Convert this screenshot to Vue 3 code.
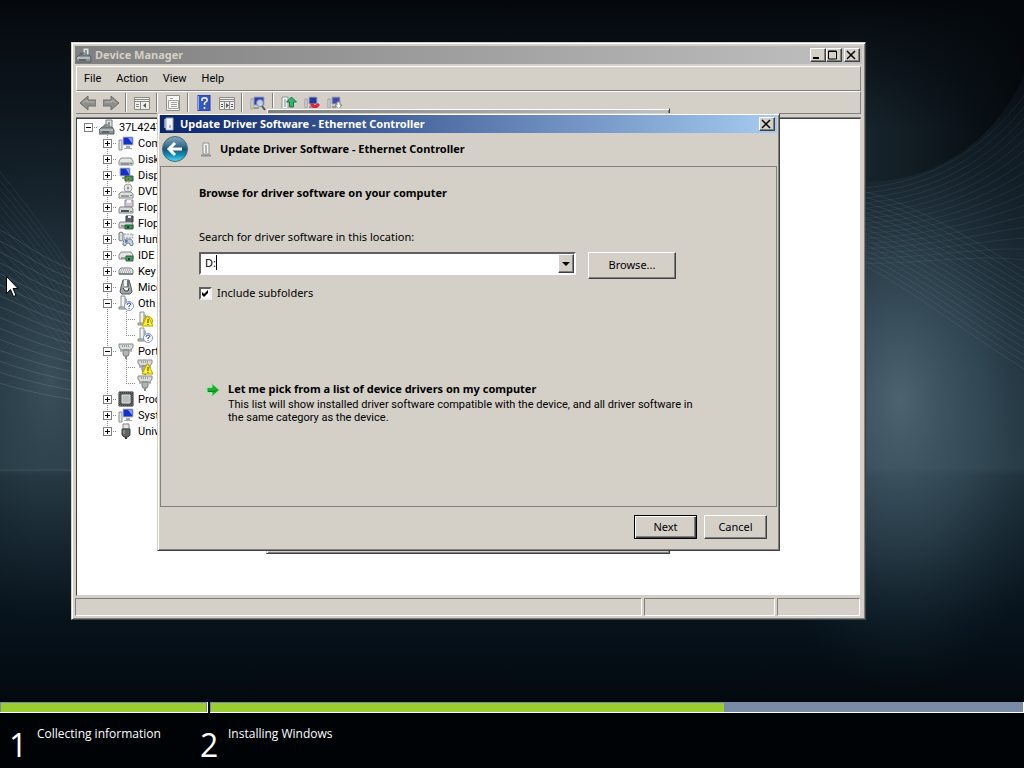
<script setup>
import { ref } from 'vue'

const location = ref('D:')
const includeSubfolders = ref(true)
const menus = ['File', 'Action', 'View', 'Help']

const tools = [
  { icon: 'back', name: 'Back' },
  { icon: 'forward', name: 'Forward' },
  { sep: true },
  { icon: 'tree-pane', name: 'Show or hide console tree' },
  { sep: true },
  { icon: 'props', name: 'Properties' },
  { sep: true },
  { icon: 'help', name: 'Help' },
  { icon: 'action-pane', name: 'Show or hide action pane' },
  { sep: true },
  { icon: 'scan', name: 'Scan for hardware changes' },
  { sep: true },
  { icon: 'update', name: 'Update driver' },
  { icon: 'uninstall', name: 'Uninstall' },
  { icon: 'disable', name: 'Disable' },
]

// guides: one cell per indent column, drawn left to right
const devices = [
  { label: '37L4247', icon: 'root', guides: ['root'] },
  { label: 'Com', icon: 'computer', guides: ['none', 'plus'] },
  { label: 'Disk', icon: 'disk', guides: ['none', 'plus'] },
  { label: 'Disp', icon: 'display', guides: ['none', 'plus'] },
  { label: 'DVD', icon: 'dvd', guides: ['none', 'plus'] },
  { label: 'Flop', icon: 'floppy', guides: ['none', 'plus'] },
  { label: 'Flop', icon: 'floppy-ctl', guides: ['none', 'plus'] },
  { label: 'Hum', icon: 'hid', guides: ['none', 'plus'] },
  { label: 'IDE', icon: 'ide', guides: ['none', 'plus'] },
  { label: 'Key', icon: 'keyboard', guides: ['none', 'plus'] },
  { label: 'Mice', icon: 'mouse', guides: ['none', 'plus'] },
  { label: 'Oth', icon: 'unknown', guides: ['none', 'minus'] },
  { label: '', icon: 'unknown-warn', guides: ['none', 'line', 'branch'] },
  { label: '', icon: 'unknown', guides: ['none', 'line', 'last'] },
  { label: 'Port', icon: 'port', guides: ['none', 'minus'] },
  { label: '', icon: 'port-warn', guides: ['none', 'line', 'branch'] },
  { label: '', icon: 'port', guides: ['none', 'line', 'last'] },
  { label: 'Proc', icon: 'cpu', guides: ['none', 'plus'] },
  { label: 'Syst', icon: 'computer', guides: ['none', 'plus'] },
  { label: 'Univ', icon: 'usb', guides: ['none', 'plus-last'] },
]

const steps = [
  { title: 'Collecting information', progress: 100 },
  { title: 'Installing Windows', progress: 63.2 },
]

function leftWave(n) {
  return `M-10 ${215 + n * 11} C 20 ${225 + n * 11}, 50 ${262 + n * 9}, 110 ${270 + n * 9}`
}
function leftWaveBack(n) {
  return `M-10 ${150 + n * 9} C 20 ${190 + n * 8}, 60 ${235 + n * 7}, 110 ${330 + n * 6}`
}
function rightWave(n) {
  return `M840 ${184 + n * 5} C 930 ${184 + n * 5}, 990 ${140 + n * 7}, 1034 ${70 + n * 12}`
}
function rightWaveBack(n) {
  return `M850 ${184 + n * 5} C 900 ${190 + n * 6}, 960 ${225 + n * 7}, 1034 ${270 + n * 7}`
}
</script>

<template>
  <main class="screen">
    <svg class="wallpaper" viewBox="0 0 1024 768" preserveAspectRatio="none" aria-hidden="true">
      <defs>
        <linearGradient id="base" x1="0" y1="0" x2="0" y2="1">
          <stop offset="0" stop-color="#04080d" />
          <stop offset=".2" stop-color="#111c24" />
          <stop offset=".5" stop-color="#22343f" />
          <stop offset=".61" stop-color="#263943" />
          <stop offset=".62" stop-color="#1c2d37" />
          <stop offset=".8" stop-color="#07131c" />
          <stop offset="1" stop-color="#000205" />
        </linearGradient>
        <radialGradient id="glow-r" gradientUnits="userSpaceOnUse" cx="0" cy="0" r="1" gradientTransform="translate(900 400) scale(170 290)">
          <stop offset="0" stop-color="#5b727e" stop-opacity=".75" />
          <stop offset=".5" stop-color="#456270" stop-opacity=".4" />
          <stop offset="1" stop-color="#1c303c" stop-opacity="0" />
        </radialGradient>
        <radialGradient id="glow-l" gradientUnits="userSpaceOnUse" cx="0" cy="0" r="1" gradientTransform="translate(50 380) scale(130 250)">
          <stop offset="0" stop-color="#58727e" stop-opacity=".45" />
          <stop offset="1" stop-color="#1c303c" stop-opacity="0" />
        </radialGradient>
        <linearGradient id="arc" x1="0" y1="0" x2="1" y2="0">
          <stop offset="0" stop-color="#1a2831" />
          <stop offset="1" stop-color="#04090d" />
        </linearGradient>
        <linearGradient id="arc-fade" x1="0" y1="0" x2="0" y2="1">
          <stop offset="0" stop-color="#04080d" />
          <stop offset="1" stop-color="#04080d" stop-opacity="0" />
        </linearGradient>
      </defs>
      <rect width="1024" height="768" fill="url(#base)" />
      <rect width="1024" height="768" fill="url(#glow-l)" />
      <rect width="1024" height="768" fill="url(#glow-r)" />
      <path d="M840 0H1024V75C1000 130 950 180 865 182H840Z" fill="url(#arc)" />
      <rect x="840" width="184" height="130" fill="url(#arc-fade)" />
      <g fill="none" stroke="#8fa5ae" stroke-opacity=".22">
        <path v-for="n in 15" :key="'l' + n" :d="leftWave(n)" />
        <path v-for="n in 14" :key="'m' + n" :d="leftWaveBack(n)" stroke-opacity=".12" />
        <path v-for="n in 16" :key="'r' + n" :d="rightWave(n)" stroke-opacity=".1" />
        <path v-for="n in 15" :key="'s' + n" :d="rightWaveBack(n)" stroke-opacity=".14" />
      </g>
      <path d="M0 470H100" stroke="#6b828c" stroke-opacity=".3" />
    </svg>

    <!-- icon sheet -->
    <svg class="sheet" aria-hidden="true">
      <symbol id="root" viewBox="0 0 16 16">
        <path d="M7 1h6v8H7z" fill="#dfe3e3" stroke="#788080" /><path d="M9 3h2v5H9z" fill="#8b9494" />
        <path d="M3 8h10l2 3v4H0v-4z" fill="#889191" stroke="#565f60" /><path d="M1 11h13" stroke="#dce4e4" /><path d="M3 13h7" stroke="#343c3c" /><path d="M5 8V6h4" fill="none" stroke="#555" />
      </symbol>
      <symbol id="computer" viewBox="0 0 16 16">
        <path d="M1 5h3v10H1z" fill="#e2e4e8" stroke="#888d94" /><path d="M5 2h10v8H5z" fill="#1730c5" stroke="#b7bfd2" /><path d="M10 3h4v5z" fill="#7a9ef5" /><path d="M8 11h4v2H8zM6 13h8v1H6z" fill="#a6a9b5" />
      </symbol>
      <symbol id="disk" viewBox="0 0 16 16">
        <path d="M3 7h10l2 3v4H1v-4z" fill="#e3e5e4" stroke="#8a8e8d" /><path d="M1 11h14v3H1z" fill="#b5b9b8" /><path d="M3 13h8" stroke="#656969" /><path d="M12 12h2v1h-2z" fill="#42a63f" />
      </symbol>
      <symbol id="display" viewBox="0 0 16 16">
        <path d="M2 1h10v8H2z" fill="#1730c5" stroke="#b7bfd2" /><path d="M8 2h3v5z" fill="#7a9ef5" /><path d="M4 10h6v2H4z" fill="#9ba3aa" /><path d="M7 9h8v5H7z" fill="#3d8e5c" stroke="#25633c" /><path d="M9 11h3v2H9zM8 14v2M11 14v2" fill="#182d22" stroke="#a69642" />
      </symbol>
      <symbol id="dvd" viewBox="0 0 16 16">
        <circle cx="10" cy="5" r="4" fill="#e9ebeb" stroke="#9b9e9e" /><path d="M10 1v8" stroke="#b9bcbc" /><circle cx="10" cy="5" r="1" fill="#777" /><path d="M3 9h10l2 2v4H1v-4z" fill="#dfe1df" stroke="#848988" /><path d="M3 13h8" stroke="#555c5a" /><path d="M12 12h2v1h-2z" fill="#42a63f" />
      </symbol>
      <symbol id="floppy" viewBox="0 0 16 16">
        <path d="M7 1h8v7H7z" fill="#cec4d2" stroke="#928a9d" /><path d="M9 1h4v3H9z" fill="#f6f3f8" /><path d="M2 8h11l2 2v4H1v-4z" fill="#d7dad8" stroke="#808583" /><path d="M3 12h8" stroke="#4e5452" stroke-width="2" /><path d="M12 12h2v1h-2z" fill="#42a63f" />
      </symbol>
      <symbol id="floppy-ctl" viewBox="0 0 16 16">
        <path d="M8 1h7v6H8z" fill="#5c6170" stroke="#373b45" /><path d="M10 1h3v2h-3z" fill="#eee" /><path d="M2 7h11l2 2v4H1V9z" fill="#d7dad8" stroke="#808583" /><path d="M3 11h5" stroke="#4e5452" /><path d="M7 10h8v4H7z" fill="#3d8e5c" stroke="#25633c" /><path d="M9 11h2v2H9z" fill="#193d28" />
      </symbol>
      <symbol id="hid" viewBox="0 0 16 16">
        <path d="M1 2q2-2 4 0v7q-2 2-4 0z" fill="#d9dada" stroke="#707575" /><path d="M6 3h9v4H6z" fill="#e4e5e5" stroke="#9ca2a4" stroke-dasharray="2 1" /><path d="M5 14q0-6 3-6h4q3 0 3 6l-2 1-2-3H9l-2 3z" fill="#c3cee0" stroke="#697fa5" /><path d="M8 9v3M7 10h3" stroke="#355d99" />
      </symbol>
      <symbol id="ide" viewBox="0 0 16 16">
        <path d="M3 5h10l2 3v4H1V8z" fill="#e3e5e4" stroke="#8a8e8d" /><path d="M3 11h5" stroke="#656969" /><path d="M8 9h7v5H8z" fill="#4b9568" stroke="#25633c" /><path d="M10 11h2v2h-2z" fill="#183d28" />
      </symbol>
      <symbol id="keyboard" viewBox="0 0 16 16">
        <path d="M3 5h10l2 2v4H1V7z" fill="#e4e5e5" stroke="#7f8484" /><path d="M3 7h10M2 9h12" stroke="#858b8b" stroke-dasharray="1 1" /><path d="M1 11h14" stroke="#505555" />
      </symbol>
      <symbol id="mouse" viewBox="0 0 16 16">
        <path d="M5 1h6l2 7 1 5-2 2H4l-2-2 1-5z" fill="#a3a8a8" stroke="#535959" /><path d="M6 1h3v6H6z" fill="#f3f4f4" /><path d="M10 2v6" stroke="#3b4040" /><path d="M5 9l2 3h3l1-3" fill="#eee" stroke="#303434" />
      </symbol>
      <symbol id="unknown-base" viewBox="0 0 16 16">
        <path d="M3 1h4v12H3z" fill="#f1f3f2" stroke="#8c9491" /><path d="M7 3l2 1v9H7z" fill="#a6aeab" /><path d="M1 12h9v2H1z" fill="#c0c7c4" stroke="#7f8784" />
      </symbol>
      <symbol id="unknown" viewBox="0 0 16 16">
        <use href="#unknown-base" /><circle cx="11" cy="11" r="4.500" fill="#fff" stroke="#8794bd" /><path d="M9 10q0-2 2-2 2 0 2 1 0 1-2 2v1M11 13v1" fill="none" stroke="#2941a0" />
      </symbol>
      <symbol id="bang" viewBox="0 0 16 16">
        <path d="M10 5h1l5 10H5z" fill="#ffef32" stroke="#b3a000" /><path d="M11 8v4M11 13v1" stroke="#42400c" />
      </symbol>
      <symbol id="unknown-warn" viewBox="0 0 16 16"><use href="#unknown-base" /><circle cx="11" cy="10" r="4.500" fill="#f5e831" stroke="#b3a000" /><use href="#bang" /></symbol>
      <symbol id="port" viewBox="0 0 16 16">
        <path d="M1 1h14v3l-2 3H3L1 4z" fill="#d8dbda" stroke="#858a88" /><path d="M4 3h8" stroke="#626967" stroke-dasharray="1 1" /><path d="M5 7h6v4l-1 2H6l-1-2z" fill="#b1b6b4" stroke="#767d7a" /><path d="M7 13h2v3H7z" fill="#858d89" /><path d="M3 7v2M13 7v2" stroke="#777" />
      </symbol>
      <symbol id="port-warn" viewBox="0 0 16 16"><use href="#port" /><use href="#bang" /></symbol>
      <symbol id="cpu" viewBox="0 0 16 16">
        <path d="M1 1h14v14H1z" fill="#505455" stroke="#2b2e2f" /><path d="M1 1h14v14H1z" fill="none" stroke="#8d9191" stroke-dasharray="1 1" /><path d="M4 4h8v8H4z" fill="#b9bdbd" stroke="#dfe1e1" />
      </symbol>
      <symbol id="usb" viewBox="0 0 16 16">
        <path d="M5 1h6v5H5z" fill="#e2e3e3" stroke="#808585" /><path d="M4 6h8v6l-2 2H6l-2-2z" fill="#606566" stroke="#3c4040" /><path d="M7 14h2v2H7z" fill="#333" /><path d="M6 7v4" stroke="#aaa" />
      </symbol>

      <symbol id="back" viewBox="0 0 16 16"><path d="M0 8l8-7v4h8v6H8v4z" fill="#8d8d8a" stroke="#6f6f6d" /><path d="M3 8l4-3v2h7" fill="none" stroke="#b7b7b3" /></symbol>
      <symbol id="forward" viewBox="0 0 16 16"><path d="M16 8L8 1v4H0v6h8v4z" fill="#8d8d8a" stroke="#6f6f6d" /><path d="M2 7h7V5l4 3" fill="none" stroke="#b7b7b3" /></symbol>
      <symbol id="tree-pane" viewBox="0 0 16 16">
        <path d="M.5 2.500h15v12H.5z" fill="#eeeeeb" stroke="#8a8a86" /><path d="M1 4.500h14M1 6.500h14M6.500 7v8" stroke="#8a8a86" /><path d="M2 9.500h3M2 11.500h3" stroke="#888" /><path d="M12 8v5L9 10.500z" fill="#555" />
      </symbol>
      <symbol id="action-pane" viewBox="0 0 16 16">
        <path d="M.5 2.500h15v12H.5z" fill="#eeeeeb" stroke="#8a8a86" /><path d="M1 4.500h14M1 6.500h14M10.500 7v8M5.500 7v8" stroke="#8a8a86" /><path d="M12 9.500h2M12 11.500h2M2 9.500h2M2 11.500h2" stroke="#555" /><path d="M7 8v5l3-2.500z" fill="#555" />
      </symbol>
      <symbol id="props" viewBox="0 0 16 16"><path d="M1.500.5h13v15h-13z" fill="#f6f6f4" stroke="#8d8d88" /><path d="M5 3.500h3M6 7.500h6M6 9.500h6M6 11.500h6M3.500 5.500h10v8h-10z" fill="none" stroke="#a3a39e" /></symbol>
      <symbol id="help" viewBox="0 0 16 16"><path d="M2 0h12v16H2z" fill="#3456cb" stroke="#2341a6" /><path d="M2.500 1v14" stroke="#91a9ef" /><path d="M6 6V4l1-1h3l1 1v2L8.500 8v2M8.500 12v2" fill="none" stroke="#fff" stroke-width="1.500" /></symbol>
      <symbol id="scan" viewBox="0 0 16 16"><path d="M1 4h2v10H1z" fill="#eee" stroke="#999" /><path d="M4 2h10v8H4z" fill="#2c3eb0" stroke="#a1a6b8" /><circle cx="10" cy="8" r="3.500" fill="#d7e6f5" fill-opacity=".85" stroke="#7686a0" /><path d="M12 11l3 4" stroke="#555" stroke-width="2" /><path d="M4 12h5v2H4z" fill="#999" /></symbol>
      <symbol id="update" viewBox="0 0 16 16"><path d="M1 2h6v12H1z" fill="#f3f3f3" stroke="#8f9692" /><path d="M3 4h2v8H3z" fill="#b7bfbb" /><path d="M7 14h4" stroke="#999" /><path d="M10.500 2l5 5h-3v5h-4V7h-3z" fill="#37b273" stroke="#197945" /></symbol>
      <symbol id="uninstall" viewBox="0 0 16 16"><path d="M1 4h2v9H1z" fill="#eee" stroke="#999" /><path d="M5 2h8v7H5z" fill="#26349e" stroke="#a9abc0" /><path d="M5 11h5v2H5z" fill="#999" /><path d="M8 8l3 2 3-2 2 2-5 5-5-5z" fill="#dc263d" /></symbol>
      <symbol id="disable" viewBox="0 0 16 16"><path d="M1 4h2v9H1z" fill="#eee" stroke="#999" /><path d="M5 2h8v7H5z" fill="#3f4da4" stroke="#a9abc0" /><path d="M5 11h4v2H5z" fill="#999" /><path d="M10 7h3v3h2l-3.500 4L8 10h2z" fill="#fff" stroke="#888" /></symbol>
    </svg>

    <section class="desktop">
      <div class="window manager">
        <header class="titlebar inactive">
          <svg class="icon"><use href="#root" /></svg>
          <h1>Device Manager</h1>
          <div class="caption-buttons">
            <button aria-label="Minimize"><svg viewBox="0 0 12 10"><path d="M2 8h6" stroke="#000" stroke-width="2" /></svg></button>
            <button aria-label="Maximize"><svg viewBox="0 0 12 10"><path d="M1.500 1h8v8h-8zM1 1.500h9" fill="none" stroke="#000" /></svg></button>
            <button class="close" aria-label="Close"><svg viewBox="0 0 12 10"><path d="M2 1l8 8M10 1L2 9" stroke="#000" stroke-width="1.500" /></svg></button>
          </div>
        </header>
        <nav class="menubar">
          <button v-for="menu in menus" :key="menu">{{ menu }}</button>
        </nav>
        <div class="toolbar">
          <template v-for="(tool, i) in tools" :key="i">
            <span v-if="tool.sep" class="sep"></span>
            <button v-else :aria-label="tool.name"><svg class="icon"><use :href="'#' + tool.icon" /></svg></button>
          </template>
        </div>
        <ul class="tree">
          <li v-for="(device, i) in devices" :key="i">
            <svg v-for="(guide, g) in device.guides" :key="g" class="guide" viewBox="0 0 19 16">
              <g fill="none" stroke="#8c8c8c" stroke-dasharray="1 1">
                <path v-if="['plus', 'minus', 'line', 'branch'].includes(guide)" d="M9.500 0v16" />
                <path v-if="['plus-last', 'last'].includes(guide)" d="M9.500 0v8" />
                <path v-if="!['none', 'line'].includes(guide)" d="M9 8.500h10" />
              </g>
              <g v-if="['root', 'plus', 'minus', 'plus-last'].includes(guide)">
                <rect x="5.500" y="4.500" width="8" height="8" fill="#fff" stroke="#808080" />
                <path d="M7 8.500h5" stroke="#000" />
                <path v-if="guide.startsWith('plus')" d="M9.500 6v5" stroke="#000" />
              </g>
            </svg>
            <svg class="icon"><use :href="'#' + device.icon" /></svg>
            <span>{{ device.label }}</span>
          </li>
        </ul>
        <footer class="statusbar"><span></span><span></span><span></span></footer>
      </div>

      <div class="window behind">
        <div class="titlebar inactive"></div>
      </div>

      <form class="window dialog" @submit.prevent>
        <header class="titlebar">
          <svg class="icon"><path d="M5 2h7v12H5z" fill="#f3f5f4" stroke="#9ca9b6" /><path d="M4 3v9" stroke="#fff" /><path d="M8 9h2v3H8z" fill="#aeb8bd" /></svg>
          <h2>Update Driver Software - Ethernet Controller</h2>
          <div class="caption-buttons">
            <button type="button" class="close" aria-label="Close"><svg viewBox="0 0 12 10"><path d="M2 1l8 8M10 1L2 9" stroke="#000" stroke-width="1.500" /></svg></button>
          </div>
        </header>
        <div class="wizard-head">
          <button type="button" class="go-back" aria-label="Back">
            <svg viewBox="0 0 28 28">
              <defs>
                <linearGradient id="orb" x1="0" y1="0" x2="0" y2="1">
                  <stop offset="0" stop-color="#86a9bb" /><stop offset=".35" stop-color="#3f7494" /><stop offset=".5" stop-color="#135477" /><stop offset=".75" stop-color="#138fb8" /><stop offset="1" stop-color="#55dcf3" />
                </linearGradient>
              </defs>
              <circle cx="14" cy="14" r="12.500" fill="url(#orb)" stroke="#4b6678" />
              <path d="M21 14H9M14 8l-6 6 6 6" fill="none" stroke="#fff" stroke-width="3" />
            </svg>
          </button>
          <svg class="icon"><path d="M5 2h6v11H5z" fill="#f4f4f2" stroke="#8e9190" /><path d="M7 4h2v8H7z" fill="#b0b4b2" /><path d="M3 14.500h10" stroke="#8e9190" stroke-width="2" /></svg>
          <strong>Update Driver Software - Ethernet Controller</strong>
        </div>
        <div class="wizard-body">
          <h3>Browse for driver software on your computer</h3>
          <label for="location">Search for driver software in this location:</label>
          <div class="location-row">
            <div class="combo">
              <input id="location" v-model="location" type="text" />
              <i class="caret"></i>
              <button type="button" aria-label="Show locations"><svg viewBox="0 0 12 16"><path d="M2 6h8l-4 4z" /></svg></button>
            </div>
            <button type="button" class="push browse">Browse...</button>
          </div>
          <div class="check-row">
            <input id="subfolders" v-model="includeSubfolders" type="checkbox" />
            <svg v-if="includeSubfolders" class="tick" viewBox="0 0 12 12"><path d="M3 5l2 2 4-4v3L5 10 3 8z" /></svg>
            <label for="subfolders">Include subfolders</label>
          </div>
          <button type="button" class="command">
            <svg viewBox="0 0 14 14"><path d="M1 4.500h5V.5l7.500 6.500L6 13.500v-4H1z" fill="#16b02d" stroke="#a5dfab" /><path d="M2 8.500h6l3-1.500" fill="none" stroke="#0a7d1d" /></svg>
            <span class="command-text">
              <strong>Let me pick from a list of device drivers on my computer</strong>
              <span>This list will show installed driver software compatible with the device, and all driver software in the same category as the device.</span>
            </span>
          </button>
        </div>
        <footer class="wizard-foot">
          <button class="push default">Next</button>
          <button type="button" class="push">Cancel</button>
        </footer>
      </form>

      <svg class="pointer" viewBox="0 0 12 21" aria-hidden="true">
        <path d="M.5.5v17l4-4 3 7 2.500-1-3-7h5z" fill="#fff" stroke="#000" />
      </svg>
    </section>

    <section class="setup">
      <div class="bars">
        <div v-for="step in steps" :key="step.title" class="bar">
          <div class="fill" :style="{ width: step.progress + '%' }"></div>
        </div>
      </div>
      <ol class="steps">
        <li v-for="(step, i) in steps" :key="step.title">
          <span class="number">{{ i + 1 }}</span>
          <span>{{ step.title }}</span>
        </li>
      </ol>
    </section>
  </main>
</template>

<style>
body {
  margin: 0;
  background: #03080d;
}
</style>

<style scoped>
.screen {
  position: relative;
  display: flex;
  flex-direction: column;
  min-height: 100vh;
  overflow: hidden;
  font-family: "Noto Sans", "Open Sans", sans-serif;
  font-size: 11px;
  line-height: 16px;
  color: #000;
}

.wallpaper {
  position: absolute;
  width: 100%;
  height: 100%;
}

.sheet {
  position: absolute;
  width: 0;
  height: 0;
}

button {
  font: inherit;
  color: inherit;
  padding: 0;
  border: none;
  background: none;
}

h1, h2, h3, ul, ol {
  margin: 0;
  padding: 0;
  font-size: inherit;
  list-style: none;
}

svg {
  display: block;
}

.icon {
  width: 16px;
  height: 16px;
  flex: none;
}

.desktop {
  position: relative;
  flex: 1;
  min-height: 640px;
}

.window {
  position: absolute;
  box-sizing: border-box;
  padding: 1px;
  background: #d4d0c8;
  border: 1px solid;
  border-color: #d4d0c8 #404040 #404040 #d4d0c8;
  box-shadow: inset 1px 1px #fff, inset -1px -1px #808080;
}

.manager {
  left: 71px;
  top: 42px;
  width: calc(100% - 229px);
  padding: 3px;
}

.behind {
  left: 266px;
  top: 108px;
  width: calc(100% - 620px);
  height: 446px;
}

.dialog {
  left: 157px;
  top: 113px;
  width: calc(100% - 401px);
}

.titlebar {
  display: flex;
  align-items: center;
  gap: 3px;
  height: 18px;
  padding: 0 2px 0 1px;
  color: #fff;
  background: linear-gradient(90deg, #0a246a, #a6caf0);
}

.dialog .titlebar {
  margin: 0 1px;
}

.titlebar.inactive {
  color: #d4d0c8;
  background: linear-gradient(90deg, #808080, #c0c0c0);
}

.caption-buttons {
  display: flex;
  margin-left: auto;
}

.caption-buttons button {
  width: 16px;
  height: 14px;
}

.caption-buttons .close {
  margin-left: 2px;
}

.caption-buttons svg {
  width: 12px;
  height: 10px;
}

.caption-buttons button,
.push,
.combo button {
  box-sizing: border-box;
  background: #d4d0c8;
  border: 1px solid;
  border-color: #fff #404040 #404040 #fff;
  box-shadow: inset -1px -1px #808080;
}

.menubar,
.tree,
.command-text span {
  font-family: Roboto, "Liberation Sans", sans-serif;
}

.menubar {
  display: flex;
  gap: 15px;
  height: 22px;
  margin: 2px 1px 0;
  padding: 1px 0 0 7px;
  border: 1px solid;
  border-color: #fff #808080 #808080 #fff;
}

.toolbar {
  display: flex;
  align-items: center;
  height: 21px;
  margin: 0 1px;
  border-top: 1px solid #fff;
  border-right: 1px solid #808080;
  border-bottom: 1px solid #808080;
}

.toolbar button {
  display: flex;
  justify-content: center;
  flex: none;
  width: 23px;
}

.sep {
  flex: none;
  width: 1px;
  height: 19px;
  margin: 0 4px 0 3px;
  background: #808080;
  box-shadow: 1px 0 #fff;
}

.tree {
  min-height: 476px;
  margin: 4px 1px 0;
  padding-left: 2px;
  line-height: 18px;
  background: #fff;
  border: 1px solid;
  border-color: #404040 #d4d0c8 #d4d0c8 #404040;
  box-shadow: 0 -1px #808080;
}

.tree li {
  display: flex;
  height: 16px;
  white-space: nowrap;
}

.tree .guide {
  width: 19px;
  height: 16px;
  flex: none;
}

.tree .icon {
  margin: 0 4px 0 1px;
}

.statusbar {
  display: grid;
  grid-template-columns: 1fr 131px 83px;
  gap: 2px;
  margin: 2px 2px 0 0;
}

.statusbar span {
  height: 16px;
  border: 1px solid;
  border-color: #808080 #fff #fff #808080;
}

.wizard-head {
  display: flex;
  align-items: center;
  box-sizing: border-box;
  height: 33px;
  padding-bottom: 2px;
}

.go-back {
  margin: 0 9px 0 2px;
}

.go-back svg {
  width: 28px;
  height: 28px;
}

.wizard-head .icon {
  margin-right: 6px;
}

.wizard-body {
  display: flex;
  flex-direction: column;
  align-items: flex-start;
  min-height: 321px;
  margin: 0 1px;
  padding: 18px 38px 0;
  border: 1px solid #808080;
}

.wizard-body h3 {
  margin-bottom: 28px;
}

.location-row {
  display: flex;
  gap: 12px;
  margin-top: 7px;
}

.combo {
  position: relative;
  display: flex;
  box-sizing: border-box;
  width: 377px;
  height: 23px;
  background: #fff;
  border: 2px solid;
  border-color: #606060 #fff #fff #606060;
}

.combo input {
  flex: 1;
  min-width: 0;
  padding: 0 4px 2px;
  font: inherit;
  border: none;
  outline: none;
  background: none;
}

.caret {
  position: absolute;
  left: 15px;
  top: 1px;
  width: 1px;
  height: 15px;
  background: #000;
}

.combo button {
  width: 16px;
}

.combo button svg {
  width: 14px;
  height: 16px;
}

.push {
  width: 63px;
  height: 24px;
  padding-bottom: 1px;
}

.browse {
  width: 88px;
  height: 27px;
}

.default {
  border-color: #000;
  box-shadow: inset 1px 1px #fff, inset -1px -1px #404040, inset -2px -2px #808080;
}

.check-row {
  position: relative;
  display: flex;
  align-items: center;
  gap: 5px;
  margin-top: 6px;
}

.check-row input {
  appearance: none;
  box-sizing: border-box;
  width: 13px;
  height: 13px;
  margin: 0;
  background: #fff;
  border: 2px solid;
  border-color: #606060 #eee #eee #606060;
}

.tick {
  position: absolute;
  left: 0;
  top: 2px;
  width: 12px;
  height: 12px;
}

.command {
  display: flex;
  gap: 8px;
  margin-top: 80px;
  padding-left: 7px;
  text-align: left;
}

.command svg {
  width: 14px;
  height: 14px;
  margin-top: 2px;
  flex: none;
}

.command-text {
  display: flex;
  flex-direction: column;
  gap: 1px;
  max-width: 466px;
  line-height: 13px;
}

.command-text strong {
  line-height: 16px;
}

.wizard-foot {
  display: flex;
  justify-content: flex-end;
  gap: 7px;
  padding: 8px 11px 10px;
}

.pointer {
  position: absolute;
  left: 6px;
  top: 276px;
  width: 12px;
  height: 21px;
}

.setup {
  position: relative;
  color: #fff;
  font-family: "Open Sans", sans-serif;
  font-size: 12px;
}

.bars {
  display: grid;
  grid-template-columns: 208px 1fr;
  gap: 2px;
}

.bar {
  box-sizing: border-box;
  height: 11px;
  padding: 1px;
  background: #7a8ca5;
  border-right: 1px solid #fff;
  border-bottom: 1px solid #fff;
}

.fill {
  height: 9px;
  background: #9acd32;
}

.steps {
  display: grid;
  grid-template-columns: 191px 1fr;
  height: 42px;
  padding: 13px 9px 0;
  background: #000306;
}

.steps li {
  display: flex;
  gap: 10px;
}

.number {
  width: 18px;
  font-size: 32px;
  line-height: 38px;
}
</style>
